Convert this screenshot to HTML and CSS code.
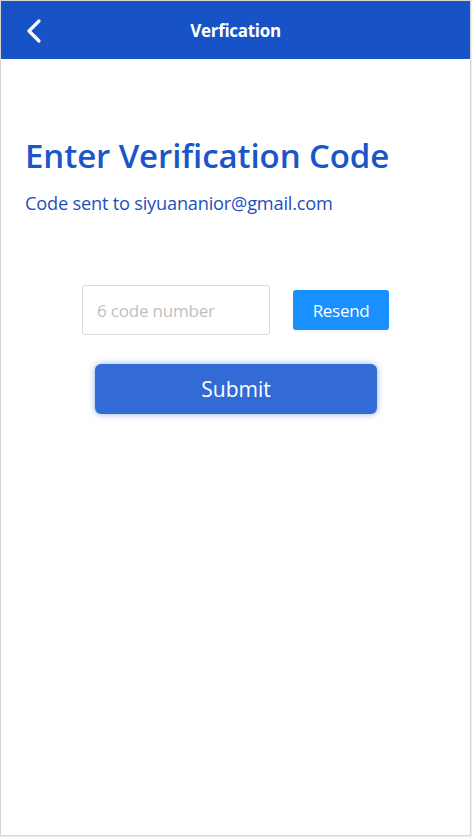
FILE: index.html
```html
<!DOCTYPE html>
<html>
<head>
<meta charset="utf-8">
<link rel="stylesheet" href="styles.css">
</head>
<body>
<div class="frame">
  <header class="topbar">
    <span class="back">
      <svg width="18" height="26" viewBox="0 0 18 26"><path d="M14 3 L4 13 L14 23" fill="none" stroke="#fff" stroke-width="3.2" stroke-linecap="round" stroke-linejoin="round"/></svg>
    </span>
    <h1 class="bar-title">Verfication</h1>
  </header>
  <main class="content">
    <h2 class="title">Enter Verification Code</h2>
    <p class="subtitle">Code sent to siyuananior@gmail.com</p>
    <div class="code-row">
      <input class="code-input" type="text" placeholder="6 code number">
      <button class="resend">Resend</button>
    </div>
    <div class="submit-row">
      <button class="submit">Submit</button>
    </div>
  </main>
</div>
</body>
</html>
```

FILE: styles.css
```css
* { box-sizing: border-box; }
html, body { margin: 0; padding: 0; }
body {
  background: #efefef;
  font-family: "Open Sans", "Noto Sans", sans-serif;
  width: 472px;
  height: 837px;
}
.frame {
  width: 471px;
  height: 836px;
  background: #fff;
  border: 1px solid #d6d6d6;
  display: flex;
  flex-direction: column;
}
.topbar {
  height: 58px;
  background: #1753c6;
  display: flex;
  align-items: center;
  justify-content: center;
  position: relative;
}
.back {
  position: absolute;
  left: 24px;
  top: 17px;
  display: flex;
}
.bar-title {
  margin: 0;
  color: #fff;
  font-size: 17px;
  font-weight: 700;
  letter-spacing: -0.3px;
}
.content {
  padding: 0 24px;
}
.title {
  margin: 73px 0 0;
  color: #1a56c8;
  font-size: 33px;
  font-weight: 600;
  letter-spacing: -0.1px;
  line-height: 48px;
}
.subtitle {
  margin: 11px 0 0;
  color: #1e4fc0;
  font-size: 18.2px;
  line-height: 24px;
  letter-spacing: -0.2px;
}
.code-row {
  margin-top: 70px;
  display: flex;
  align-items: center;
  padding-left: 57px;
}
.code-input {
  width: 188px;
  height: 50px;
  border: 1px solid #d9d9d9;
  border-radius: 3px;
  padding: 0 14px;
  font-family: inherit;
  font-size: 17px;
  letter-spacing: -0.2px;
  color: #333;
  outline: none;
}
.code-input::placeholder { color: #bfbfbf; }
.resend {
  margin-left: 23px;
  width: 96px;
  height: 40px;
  border: none;
  border-radius: 3px;
  background: #1890ff;
  color: #fff;
  font-family: inherit;
  font-size: 17px;
  letter-spacing: -0.3px;
  box-shadow: 0 2px 0 rgba(0,0,0,0.04);
}
.submit-row {
  margin-top: 29px;
  padding-left: 70px;
}
.submit {
  width: 282px;
  height: 50px;
  border: none;
  border-radius: 6px;
  background: #326bd6;
  color: #fff;
  font-family: inherit;
  font-size: 21px;
  box-shadow: 0 0 6px rgba(50,107,214,0.55);
}
```
